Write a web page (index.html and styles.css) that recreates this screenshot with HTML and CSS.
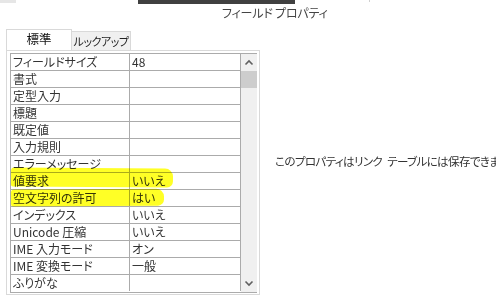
FILE: index.html
```html
<!DOCTYPE html>
<html lang="ja">
<head>
    <meta charset="UTF-8">
    <title>フィールド プロパティ</title>
    <link rel="stylesheet" href="styles.css">
</head>
<body>
    <div class="top-strip">
        <div class="strip-box"></div>
        <div class="strip-bar"></div>
        <div class="strip-tick"></div>
    </div>

    <div class="title">フィールド プロパティ</div>

    <div class="main">
        <div class="property-sheet">
            <div class="tabs">
                <div class="tab selected">標準</div>
                <div class="tab">ルックアップ</div>
            </div>

            <div class="panel">
                <div class="grid">
                    <div class="rows">
                        <div class="row"><div class="cell label">フィールドサイズ</div><div class="cell value">48</div></div>
                        <div class="row"><div class="cell label">書式</div><div class="cell value"></div></div>
                        <div class="row"><div class="cell label">定型入力</div><div class="cell value"></div></div>
                        <div class="row"><div class="cell label">標題</div><div class="cell value"></div></div>
                        <div class="row"><div class="cell label">既定値</div><div class="cell value"></div></div>
                        <div class="row"><div class="cell label">入力規則</div><div class="cell value"></div></div>
                        <div class="row"><div class="cell label">エラーメッセージ</div><div class="cell value"></div></div>
                        <div class="row"><div class="cell label">値要求</div><div class="cell value">いいえ</div></div>
                        <div class="row"><div class="cell label">空文字列の許可</div><div class="cell value">はい</div></div>
                        <div class="row"><div class="cell label">インデックス</div><div class="cell value">いいえ</div></div>
                        <div class="row"><div class="cell label">Unicode 圧縮</div><div class="cell value">いいえ</div></div>
                        <div class="row"><div class="cell label">IME 入力モード</div><div class="cell value">オン</div></div>
                        <div class="row"><div class="cell label">IME 変換モード</div><div class="cell value">一般</div></div>
                        <div class="row"><div class="cell label">ふりがな</div><div class="cell value"></div></div>
                    </div>

                    <div class="scrollbar">
                        <svg class="arrow" width="16" height="16" viewBox="0 0 16 16">
                            <path d="M4.5 10 L8 6.5 L11.5 10" fill="none" stroke="#606060" stroke-width="1.6"/>
                        </svg>
                        <div class="thumb"></div>
                        <div class="track"></div>
                        <svg class="arrow" width="16" height="16" viewBox="0 0 16 16">
                            <path d="M4.5 6 L8 9.5 L11.5 6" fill="none" stroke="#606060" stroke-width="1.6"/>
                        </svg>
                    </div>
                </div>

                <!-- marker highlights drawn over the sheet -->
                <div class="marker marker-one"></div>
                <div class="marker marker-two"></div>
            </div>
        </div>

        <div class="message">このプロパティはリンク テーブルには保存できません。</div>
    </div>
</body>
</html>
```

FILE: styles.css
```css
* {
    margin: 0;
    padding: 0;
    box-sizing: border-box;
}

body {
    width: 496px;
    height: 300px;
    overflow: hidden;
    background-color: #ffffff;
    font-family: "Noto Sans CJK JP", "Noto Sans", sans-serif;
    font-feature-settings: "palt";
    font-size: 12px;
    color: #333;
}

.top-strip {
    display: flex;
    height: 5px;
}

.strip-box {
    width: 16px;
    height: 3px;
    background-color: #e6e6e6;
}

.strip-bar {
    width: 157px;
    height: 4px;
    margin-left: 122px;
    background-color: #404040;
}

.strip-tick {
    width: 1px;
    height: 2px;
    margin-left: 74px;
    background-color: #d0d0d0;
}

.title {
    padding-left: 222px;
    height: 20px;
    line-height: 14px;
    padding-top: 1px;
    color: #444;
    letter-spacing: -0.2px;
}

.main {
    display: flex;
    padding-top: 4px;
}

.property-sheet {
    width: 254px;
    margin-left: 6px;
    flex-shrink: 0;
}

.tabs {
    display: flex;
    align-items: flex-end;
    height: 21px;
}

.tab {
    height: 19px;
    width: 59px;
    background-color: #f0f0f0;
    border: 1px solid #d9d9d9;
    border-left: none;
    border-bottom: none;
    text-align: center;
    line-height: 18px;
    font-size: 11px;
    color: #222;
    letter-spacing: -0.5px;
    white-space: nowrap;
}

.tab.selected {
    height: 22px;
    width: 66px;
    background-color: #ffffff;
    border-left: 1px solid #d9d9d9;
    margin-bottom: -1px;
    line-height: 18px;
    font-size: 12.5px;
    letter-spacing: 0;
    color: #111;
    position: relative;
}

.panel {
    position: relative;
    border: 1px solid #d9d9d9;
    height: 245px;
    padding: 2px 3px 0 3px;
}

.grid {
    display: flex;
    border-top: 1px solid #ababab;
    border-left: 1px solid #ababab;
    border-bottom: 1px solid #ababab;
    width: 247px;
}

.rows {
    display: flex;
    flex-direction: column;
}

.row {
    display: flex;
    height: 17px;
    border-bottom: 1px solid #ababab;
}

.row:last-child {
    border-bottom: none;
}

.cell {
    height: 16px;
    line-height: 16px;
    padding-left: 2px;
    border-right: 1px solid #ababab;
    white-space: nowrap;
    overflow: hidden;
}

.label {
    width: 119px;
}

.value {
    width: 111px;
}

.scrollbar {
    display: flex;
    flex-direction: column;
    width: 16px;
    background-color: #f0f0f0;
}

.arrow {
    display: block;
    height: 17px;
}

.thumb {
    height: 17px;
    background-color: #cdcdcd;
}

.track {
    flex: 1;
}

.marker {
    position: absolute;
    background-color: rgba(255, 255, 0, 0.85);
    mix-blend-mode: multiply;
    border-radius: 3px 8px 6px 2px;
}

.marker-one {
    left: 4px;
    top: 117px;
    width: 162px;
    height: 19px;
    transform: rotate(0.4deg);
}

.marker-two {
    left: 4px;
    top: 138px;
    width: 153px;
    height: 17px;
    transform: rotate(-0.3deg);
}

.message {
    margin-left: 15px;
    padding-top: 124px;
    white-space: nowrap;
    font-size: 11.5px;
    letter-spacing: -0.6px;
    word-spacing: 3px;
}
```
